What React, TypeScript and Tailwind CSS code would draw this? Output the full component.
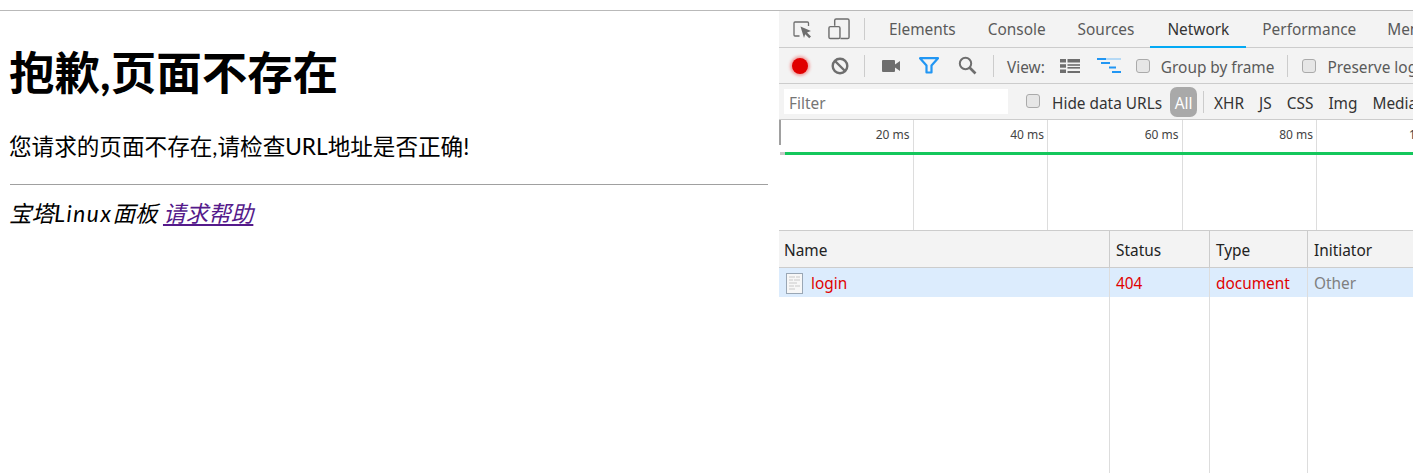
import React from 'react';

const uiFont = "font-['Noto_Sans','Noto_Sans_CJK_SC',sans-serif]";

const tabs = ['Elements', 'Console', 'Sources', 'Network', 'Performance', 'Memory'];
const filters = ['XHR', 'JS', 'CSS', 'Img', 'Media'];
const ticks = ['20 ms', '40 ms', '60 ms', '80 ms'];

const Divider = () => <div className="w-px h-[22px] bg-[#ccc] shrink-0" />;

const Check = ({ className = '' }: { className?: string }) => (
    <span className={`w-[14px] h-[14px] rounded-[3px] border border-[#aaa] bg-[#e6e6e6] shrink-0 ${className}`} />
);

const Inspect = () => (
    <svg width="19" height="19" viewBox="0 0 19 19" fill="none" className="shrink-0">
        <path d="M6.500 16H2Q1 16 1 15V3Q1 2 2 2H14.500Q15.500 2 15.500 3V6" stroke="#6e6e6e" strokeWidth="1.300" />
        <path d="M7.500 6.500l10.500 4.500-4 1.500 4 4-1.800 1.800-4-4-1.200 3.700z" fill="#6e6e6e" />
    </svg>
);

const Device = () => (
    <svg width="22" height="22" viewBox="0 0 23 23" fill="none" stroke="#6e6e6e" strokeWidth="1.500" className="shrink-0">
        <path d="M7 8V2.500Q7 1 8.500 1H20.500Q22 1 22 2.500V20Q22 21.500 20.500 21.500H13" />
        <rect x="1" y="9" width="11.500" height="12.500" rx="1.500" />
    </svg>
);

const Clear = () => (
    <svg width="18" height="18" viewBox="0 0 18 18" fill="none" stroke="#6e6e6e" strokeWidth="2.400" className="shrink-0">
        <circle cx="9" cy="9" r="7.300" />
        <path d="M4 4l10 10" />
    </svg>
);

const Camera = () => (
    <svg width="18" height="12" viewBox="0 0 18 12" fill="#6e6e6e" className="shrink-0">
        <rect x="0" y="0" width="13" height="12" rx="1" />
        <path d="M13 4.500L18 1v10l-5-3.500z" />
    </svg>
);

const Funnel = () => (
    <svg width="20" height="17" viewBox="0 0 20 17" fill="none" stroke="#2196f3" strokeWidth="2.200" className="shrink-0">
        <path d="M1 1.200h18l-6.500 7.300v7h-5v-7z" strokeLinejoin="round" />
    </svg>
);

const Search = () => (
    <svg width="19" height="19" viewBox="0 0 19 19" fill="none" stroke="#6e6e6e" className="shrink-0">
        <circle cx="7.500" cy="7.500" r="5.700" strokeWidth="2" />
        <path d="M11.500 11.500l6 6" strokeWidth="2.600" />
    </svg>
);

const ListView = () => (
    <svg width="20" height="14" viewBox="0 0 20 14" fill="#6e6e6e" className="shrink-0">
        <rect x="0" y="0" width="6" height="3.500" />
        <rect x="7.500" y="0" width="12.500" height="3.500" />
        <rect x="0" y="5.200" width="6" height="3.500" />
        <rect x="7.500" y="5.200" width="12.500" height="1.600" />
        <rect x="7.500" y="8" width="12.500" height="1.600" />
        <rect x="0" y="10.500" width="6" height="3.500" />
        <rect x="7.500" y="12" width="12.500" height="2" />
    </svg>
);

const WaterfallView = () => (
    <svg width="24" height="15" viewBox="0 0 24 15" fill="#2196f3" className="shrink-0">
        <rect x="0" y="0" width="9" height="2" />
        <rect x="9" y="0" width="15" height="2" fill="#b5d9f5" />
        <rect x="4" y="4" width="9" height="2" />
        <rect x="12" y="8.500" width="7" height="2" />
        <rect x="15" y="13" width="9" height="2" />
    </svg>
);

const DocIcon = () => (
    <svg width="17" height="21" viewBox="0 0 17 21" fill="none" className="shrink-0">
        <rect x="0.500" y="0.500" width="16" height="20" fill="#f7f7f7" stroke="#9aa7b5" />
        <path d="M3 4h6M10 4h4M3 7h4M8 7h6M3 10h8M3 13h5M9 13h5M3 16h6" stroke="#c9c9c9" />
    </svg>
);

const App: React.FC = () => {
    return (
        <div className="w-[1413px] h-[473px] overflow-hidden bg-white flex flex-col font-['Lato','Noto_Sans_CJK_SC',sans-serif]">
            <div className="h-[11px] shrink-0 border-b border-[#b9b9b9]" />
            <div className="flex flex-1 min-h-0">
                {/* Page */}
                <div className="w-[779px] shrink-0 pl-[10px] pr-[11px] text-black">
                    <h1 className="text-[45.500px] leading-[64px] font-bold mt-[30px] -ml-px">抱歉,页面不存在</h1>
                    <p className="text-[22.600px] leading-[32px] mt-[26px] -ml-px">您请求的页面不存在,请检查URL地址是否正确!</p>
                    <hr className="border-t border-[#a0a0a0] mt-[21px]" />
                    <p className="text-[22.600px] leading-[32px] italic mt-[13px] -ml-px">
                        宝塔<span className="tracking-[1.600px]">Linux</span>面板{' '}
                        <a href="#help" className="underline text-[#551a8b]">请求帮助</a>
                    </p>
                </div>

                {/* DevTools */}
                <div className={`flex-1 min-w-0 overflow-hidden flex flex-col text-[#333] ${uiFont}`}>
                    <div className="h-[37px] shrink-0 bg-[#f3f3f3] border-b border-[#ccc] flex items-center pl-[14px] whitespace-nowrap">
                        <Inspect />
                        <div className="ml-[16px] mr-[14px] shrink-0"><Device /></div>
                        <Divider />
                        <div className="flex h-full ml-[8px]">
                            <span className="h-[37px] px-[16px] leading-[38px] text-[15.400px] text-[#5a5a5a]">{tabs[0]}</span>
                            <span className="h-[37px] px-[16px] leading-[38px] text-[15.400px] text-[#5a5a5a]">{tabs[1]}</span>
                            <span className="h-[37px] px-[16px] leading-[38px] text-[15.400px] text-[#5a5a5a]">{tabs[2]}</span>
                            <span className="h-[37px] px-[17px] leading-[38px] text-[15.400px] text-[#333] border-b-2 border-[#03a9f4]">{tabs[3]}</span>
                            <span className="h-[37px] pl-[16px] pr-[15px] leading-[38px] text-[15.400px] text-[#5a5a5a]">{tabs[4]}</span>
                            <span className="h-[37px] px-[16px] leading-[38px] text-[15.400px] text-[#5a5a5a]">{tabs[5]}</span>
                        </div>
                    </div>

                    <div className="h-[36px] shrink-0 bg-[#f3f3f3] border-b border-[#ccc] flex items-center pl-[13px] whitespace-nowrap text-[15.400px] text-[#5a5a5a]">
                        <span className="w-[16px] h-[16px] rounded-full bg-[#e00000] shadow-[0_0_3px_2px_#f0a0a0] shrink-0" />
                        <div className="ml-[23px] shrink-0"><Clear /></div>
                        <div className="ml-[15px] shrink-0"><Divider /></div>
                        <div className="ml-[17px] shrink-0"><Camera /></div>
                        <div className="ml-[19px] shrink-0"><Funnel /></div>
                        <div className="ml-[19px] shrink-0"><Search /></div>
                        <div className="ml-[16px] shrink-0"><Divider /></div>
                        <span className="ml-[13px] pt-[4px]">View:</span>
                        <div className="ml-[15px] shrink-0"><ListView /></div>
                        <div className="ml-[17px] shrink-0"><WaterfallView /></div>
                        <Check className="ml-[15px]" />
                        <span className="ml-[11px] pt-[4px]">Group by frame</span>
                        <div className="ml-[13px] shrink-0"><Divider /></div>
                        <Check className="ml-[14px]" />
                        <span className="ml-[11px] pt-[4px]">Preserve log</span>
                    </div>

                    <div className="h-[36px] shrink-0 bg-[#f3f3f3] border-b border-[#ccc] flex items-center pl-[5px] whitespace-nowrap text-[15.400px]">
                        <div className="w-[224px] h-[25px] bg-white text-[#757575] pl-[5px] leading-[29px] shrink-0 overflow-hidden">Filter</div>
                        <Check className="ml-[18px] -mt-px" />
                        <span className="ml-[12px] pt-[4px] text-[#333]">Hide data URLs</span>
                        <span className="ml-[8px] w-[27px] h-[30px] rounded-[7px] bg-[#a9a9a9] text-white text-center leading-[33px] shrink-0 overflow-hidden">All</span>
                        <div className="ml-[6px] shrink-0"><Divider /></div>
                        <div className="flex gap-[15px] ml-[10px] pt-[4px] text-[#333]">
                            {filters.map((f) => <span key={f}>{f}</span>)}
                        </div>
                    </div>

                    {/* Overview */}
                    <div className="h-[111px] shrink-0 relative flex border-b border-[#ccc] bg-white">
                        <div className="w-[2px] h-[25px] bg-[#a0a0a0] absolute left-0 top-0" />
                        {ticks.map((t) => (
                            <div key={t} className="w-[134.500px] shrink-0 border-r border-[#ddd] text-right pr-[3px] pt-[6px] text-[12px] leading-[18px] text-[#444]">
                                {t}
                            </div>
                        ))}
                        <div className="w-[134.500px] shrink-0 text-right pr-[3px] pt-[6px] text-[12px] leading-[18px] text-[#444] whitespace-nowrap overflow-hidden">
                            <span className="pl-[92px]">100 ms</span>
                        </div>
                        <div className="absolute left-[1px] w-[5px] top-[32px] h-[3px] bg-[#c8c8c8]" />
                        <div className="absolute left-[6px] right-0 top-[32px] h-[3px] bg-[#14c75c]" />
                    </div>

                    {/* Requests */}
                    <div className="h-[37px] shrink-0 bg-[#f3f3f3] border-b border-[#ccc] grid grid-cols-[331px_100px_98px_1fr] leading-[40px] text-[15.400px] text-[#222]">
                        <div className="pl-[5px] border-r border-[#ccc]">Name</div>
                        <div className="pl-[6px] border-r border-[#ccc]">Status</div>
                        <div className="pl-[6px] border-r border-[#ccc]">Type</div>
                        <div className="pl-[6px]">Initiator</div>
                    </div>
                    <div className="h-[29px] shrink-0 bg-[#dcecfd] grid grid-cols-[331px_100px_98px_1fr] leading-[31px] text-[15.400px] text-[#e00000]">
                        <div className="pl-[7px] border-r border-[#ddd] flex items-center gap-[8px]">
                            <DocIcon />
                            <span>login</span>
                        </div>
                        <div className="pl-[6px] border-r border-[#ddd]">404</div>
                        <div className="pl-[6px] border-r border-[#ddd]">document</div>
                        <div className="pl-[6px] text-[#808080]">Other</div>
                    </div>
                    <div className="flex-1 grid grid-cols-[331px_100px_98px_1fr]">
                        <div className="border-r border-[#ddd]" />
                        <div className="border-r border-[#ddd]" />
                        <div className="border-r border-[#ddd]" />
                        <div />
                    </div>
                </div>
            </div>
        </div>
    );
};

export default App;
